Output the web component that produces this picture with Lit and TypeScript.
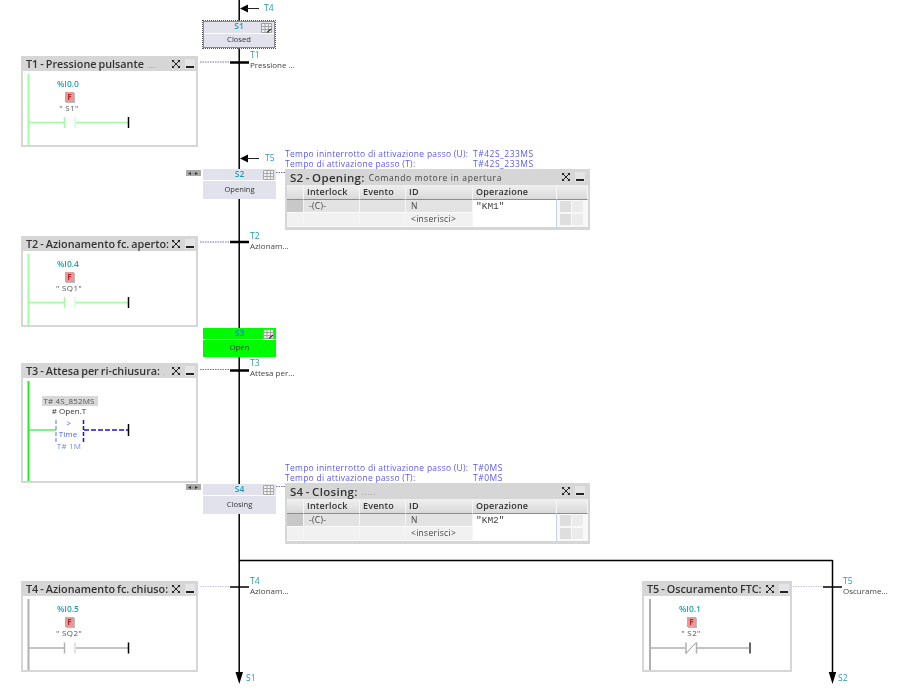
import { LitElement, html, css, svg, nothing } from "lit";
import { customElement } from "lit/decorators.js";

const pos = (x: number, y: number, w?: number, h?: number) =>
  `left:${x}px;top:${y}px;` + (w !== undefined ? `width:${w}px;` : "") + (h !== undefined ? `height:${h}px;` : "");

const expandIcon = svg`<svg class="ico" width="10" height="10" viewBox="0 0 10 10"><path d="M1 1h2.6L1 3.6zM9 1v2.6L6.4 1zM1 9V6.4L3.6 9zM9 9H6.4L9 6.4z" fill="#222"/><path d="M2 2l6 6M8 2l-6 6" stroke="#222" stroke-width="1"/></svg>`;

interface Tr { name: string; dim?: string; x: number; y: number; w: number; h: number; }

@customElement("app-root")
export class AppRoot extends LitElement {
  static styles = css`
    :host { display: block; width: 900px; height: 698px; }
    .canvas { position: relative; width: 900px; height: 698px; background: #fff; overflow: hidden; font-family: "Open Sans", "Noto Sans", sans-serif; filter: blur(0.25px); }
    .txt { position: absolute; white-space: pre; line-height: 10px; }
    .wire { position: absolute; left: 0; top: 0; width: 900px; height: 698px; }
    .teal { color: #1f9fae; font-size: 8.5px; }
    .sub { color: #444; font-size: 8px; }

    .step { position: absolute; box-sizing: border-box; background: #e1e2ec; display: flex; flex-direction: column; color: #333; font-size: 7.6px; text-align: center; }
    .step.green { background: #00fa00; }
    .step.green .n { color: #0b8fb0; }
    .step.sel { outline: 1px dotted #555; box-shadow: inset 0 0 0 1px #8a8a8a; padding: 1px; }
    .step .n { height: 12px; line-height: 10px; font-size: 8.5px; font-weight: 600; color: #1f9fae; border-bottom: 1px solid #fff; flex: none; position: relative; box-sizing: border-box; }
    .step.sel .n { line-height: 7px; }
    .step .l { flex: 1; display: flex; align-items: center; justify-content: center; padding-bottom: 3px; }
    .step .g { position: absolute; right: 2px; top: 1px; }
    .handle { position: absolute; background: #a9a9a9; color: #333; font-size: 6px; line-height: 6px; text-align: center; letter-spacing: 1px; }

    .panel { position: absolute; box-sizing: border-box; border: 2px solid #d6d6d6; background: #fff; }
    .panel .hd { position: absolute; left: -2px; right: -2px; top: -2px; height: 15px; background: #d6d6d6; display: flex; align-items: center; padding-left: 5px; }
    .panel .t { font-size: 10.8px; font-weight: 600; color: #333; white-space: pre; word-spacing: -.8px; flex: 1; overflow: hidden; }
    .panel .t i { font-style: normal; font-weight: 400; color: #999; font-size: 7px; }
    .btns { display: flex; align-items: center; gap: 4px; padding-right: 3px; flex: none; }
    .min { width: 8px; height: 10px; position: relative; padding: 0 1px; background: #e4e4e4; }
    .min::after { content: ""; position: absolute; left: 1px; right: 1px; bottom: 1px; height: 2px; background: #222; }

    .addr { position: absolute; font-size: 8.5px; font-weight: 600; color: #1fa3b0; line-height: 10px; white-space: pre; transform: translateX(-50%); }
    .tag { position: absolute; font-size: 8px; color: #555; line-height: 10px; white-space: pre; transform: translateX(-50%); letter-spacing: .4px; }
    .tag.val { left: 69px; top: 396px; letter-spacing: .15px; }
    .tag.var { left: 69px; top: 406px; color: #333; letter-spacing: 0; }
    .tag.gt { left: 69px; top: 418px; color: #4a64e4; }
    .tag.ty { left: 68px; top: 429px; color: #4a64e4; letter-spacing: 0; }
    .tag.lim { left: 69px; top: 441px; color: #6f8be6; letter-spacing: .2px; }
    .valbg { position: absolute; left: 42px; top: 396px; width: 56px; height: 10px; background: #d8d8d8; }
    .f { position: absolute; width: 9px; height: 10px; background: #e39a9c; color: #c62020; font-size: 8px; font-weight: 700; line-height: 10px; text-align: center; box-shadow: 1px 1px 0 #bbb; }

    .info { position: absolute; font-size: 8.5px; line-height: 10px; color: #5d5bea; white-space: pre; letter-spacing: .27px; }
    .info.val { letter-spacing: .5px; }

    .act { position: absolute; box-sizing: border-box; width: 305px; height: 61px; background: #d6d6d6; padding: 0 2px 3px; display: flex; flex-direction: column; }
    .act .hd { height: 16px; flex: none; display: flex; align-items: center; padding-left: 3px; }
    .act .t { font-size: 11.5px; font-weight: 600; color: #333; letter-spacing: .3px; word-spacing: -1px; white-space: pre; }
    .act .d { font-size: 8.5px; color: #444; letter-spacing: .65px; margin-left: 4px; flex: 1; white-space: pre; }
    .act .d.dim { color: #999; }
    .grid { flex: 1; display: grid; grid-template-columns: 17px 56px 46px 67px 84px 31px; grid-template-rows: 15px 13px 14px; background: #fff; }
    .h { background: linear-gradient(#f0f0f0, #d9d9d9); border-bottom: 1px solid #6c8fd8; border-right: 1px solid #f6f6f6; font-size: 9px; font-weight: 600; color: #333; line-height: 14px; padding-left: 3px; letter-spacing: .2px; }
    .c { background: #e3e3e3; border-right: 1px solid #f5f5f5; border-bottom: 1px solid #fafafa; font-size: 8.5px; color: #444; line-height: 11px; padding-left: 5px; letter-spacing: .3px; }
    .c.lt { background: #f1f1f1; }
    .c.sel { background: #c8c8c8; }
    .op { grid-column: 5; grid-row: 2 / span 2; background: #fff; font-family: "Liberation Mono", monospace; font-size: 9.5px; line-height: 11px; color: #444; padding: 1px 3px 0; border-right: 1px solid #c9d4ea; }
    .bt { grid-column: 6; grid-row: 2 / span 2; background: #f8f8f8; display: grid; grid-template-columns: 11px 11px; grid-auto-rows: 11px; gap: 2px 1px; padding: 1px 2px 0 3px; }
    .bt span { background: #dedede; }
    .bt span:nth-child(even) { background: #ebebeb; }
  `;

  private tr(t: Tr, rung: unknown) {
    return html`<div class="panel" style=${pos(t.x, t.y, t.w, t.h)}>
      <div class="hd"><span class="t">${t.name}${t.dim ? html` <i>${t.dim}</i>` : nothing}</span>
        <span class="btns">${expandIcon}<span class="min"></span></span></div>
    </div>${rung}`;
  }

  private contact(top: number, addr: string, tag: string, cx: number) {
    return html`<span class="addr" style=${pos(cx, top + 23)}>${addr}</span>
      <span class="f" style=${pos(cx - 3, top + 36)}>F</span>
      <span class="tag" style=${pos(cx + 1, top + 47)}>${tag}</span>`;
  }

  private label(x: number, y: number, a: string, b: string) {
    return html`<span class="txt teal" style=${pos(x, y)}>${a}</span><span class="txt sub" style=${pos(x, y + 10)}>${b}</span>`;
  }

  private grip() {
    return svg`<svg class="g" width="11" height="10" viewBox="0 0 11 10"><path d="M.5.5h10v9H.5zM4 .5v9M7.500 .5v9M.5 3.500h10M.5 6.500h10" fill="#f3f3f7" stroke="#a8a8a8" stroke-width="1"/></svg>`;
  }
  private gripEdit() {
    return svg`<svg class="g" width="11" height="10" viewBox="0 0 11 10"><path d="M.5.5h10v9H.5zM4 .5v9M7.500 .5v9M.5 3.500h10M.5 6.500h10" fill="#eef0f3" stroke="#a0a0a0" stroke-width="1"/><path d="M6 9.500l4-3.500" stroke="#333" stroke-width="1.200"/></svg>`;
  }

  private action(y: number, name: string, desc: string, dim: boolean, op: string) {
    return html`<div class="act" style=${pos(285, y)}>
      <div class="hd"><span class="t">${name}</span><span class="d ${dim ? "dim" : ""}">${desc}</span>
        <span class="btns">${expandIcon}<span class="min"></span></span></div>
      <div class="grid">
        <div class="h"></div><div class="h">Interlock</div><div class="h">Evento</div><div class="h">ID</div><div class="h">Operazione</div><div class="h"></div>
        <div class="c sel"></div><div class="c">-(C)-</div><div class="c"></div><div class="c">N</div>
        <div class="op">${op}</div>
        <div class="bt"><span></span><span></span><span></span><span></span></div>
        <div class="c lt"></div><div class="c lt"></div><div class="c lt"></div><div class="c lt">&lt;inserisci&gt;</div>
      </div>
    </div>`;
  }

  private wires() {
    const G = "#a3fba3";
    const K = "#b0b0b0";
    const rung = (rail: string, rx: number, top: number, bot: number, y: number, c1: number, c2: number, end: number, endC: string, second: string) => svg`
      <path d="M${rx} ${top}V${bot}" stroke=${rail} stroke-width="2" fill="none"/>
      <path d="M${rx} ${y}H${c1}M${c2} ${y}H${end}" stroke=${rail} stroke-width="1.500" fill="none"/>
      <path d="M${c1 + .5} ${y - 5.5}v11" stroke=${rail} stroke-width="1.500"/>
      <path d="M${c2 - .5} ${y - 5.5}v11" stroke=${second} stroke-width="1.500"/>
      <path d="M${end + .5} ${y - 5.5}v11" stroke=${endC} stroke-width="1.500"/>`;
    return svg`<svg class="wire" viewBox="0 0 900 698">
      <path d="M239.200 0V674M239 560.500H832.500M832.500 560V674" stroke="#000" stroke-width="1.500" fill="none"/>
      <path d="M235.500 672h7.500l-3.700 12zM828.700 672h7.500l-3.700 12z" fill="#000"/>
      <path d="M240 8.500l8-4v8zM240 158.500l8-4v8z" fill="#000"/>
      <path d="M246 8.500H259M246 158.500H259" stroke="#222" stroke-width="1"/>

      <path d="M230 62.500H249M230 242H249M230 370.500H249" stroke="#000" stroke-width="2.500"/>
      <path d="M230 587H249M823 587H842" stroke="#000" stroke-width="1.500"/>
      <path d="M200 62H229M200 242H229M200 369.500H229" stroke="#6c6cc8" stroke-width="1" stroke-dasharray="1.500 1" fill="none"/>
      <path d="M200 586.500H229M793 586.500H822" stroke="#c8c4e4" stroke-width="1" stroke-dasharray="1.500 1" fill="none"/>
      <path d="M276 172.500H285M276 486.500H285" stroke="#7272b8" stroke-width="1" stroke-dasharray="1.500 1" fill="none"/>

      ${rung(G, 28.5, 74, 145, 122.5, 64, 75.5, 128, "#000", "#d4fdd4")}
      ${rung(G, 28.5, 254, 325, 302.5, 64, 75.5, 128, "#000", "#d4fdd4")}
      ${rung(K, 28.5, 599, 670, 648, 64, 75.5, 128, "#000", "#dcdcdc")}

      <path d="M28.500 381V481" stroke="#22ee22" stroke-width="2"/>
      <path d="M28.500 430H56" stroke="#55ee55" stroke-width="1.500"/>
      <path d="M56 420V442" stroke="#6c8cf0" stroke-width="1.200" stroke-dasharray="4 2"/>
      <path d="M83.500 420V442" stroke="#1717d0" stroke-width="1.500" stroke-dasharray="4 2"/>
      <path d="M84 430H128" stroke="#1717d0" stroke-width="1.500" stroke-dasharray="5 2"/>
      <path d="M128.500 424V436" stroke="#000" stroke-width="1.500"/>

      <path d="M650 599V670" stroke=${K} stroke-width="2"/>
      <path d="M650 648H685M697 648H749" stroke=${K} stroke-width="1.500"/>
      <path d="M686 642.500V653.500M696.500 642.500V653.500" stroke=${K} stroke-width="1.500"/>
      <path d="M686 653.500L696 642.500" stroke="#999" stroke-width="1"/>
      <path d="M750 642.500V653.500" stroke="#666" stroke-width="2"/>
    </svg>`;
  }

  render() {
    return html`<div class="canvas">
      ${this.tr({ name: "T1 - Pressione pulsante", dim: " .....", x: 21, y: 56, w: 177, h: 91 }, this.contact(56, "%I0.0", '" S1"', 68))}
      ${this.tr({ name: "T2 - Azionamento fc. aperto:", x: 21, y: 236, w: 177, h: 91 }, this.contact(236, "%I0.4", '" SQ1"', 68))}
      ${this.tr({ name: "T3 - Attesa per ri-chiusura:", dim: " .", x: 21, y: 363, w: 177, h: 120 }, html`
        <span class="valbg"></span>
        <span class="tag val">T# 4S_852MS</span>
        <span class="tag var"># Open.T</span>
        <span class="tag gt">&gt;</span>
        <span class="tag ty">Time</span>
        <span class="tag lim">T# 1M</span>`)}
      ${this.tr({ name: "T4 - Azionamento fc. chiuso:", x: 21, y: 581, w: 177, h: 91 }, this.contact(581, "%I0.5", '" SQ2"', 68))}
      ${this.tr({ name: "T5 - Oscuramento FTC:", x: 642, y: 581, w: 150, h: 91 }, this.contact(581, "%I0.1", '" S2"', 690))}

      ${this.wires()}

      <span class="txt teal" style=${pos(264, 3)}>T4</span>
      <span class="txt teal" style=${pos(265, 153)}>T5</span>
      <span class="txt teal" style=${pos(246, 673)}>S1</span>
      <span class="txt teal" style=${pos(838, 673)}>S2</span>
      ${this.label(250, 50, "T1", "Pressione ...")}
      ${this.label(250, 231, "T2", "Azionam...")}
      ${this.label(250, 358, "T3", "Attesa per...")}
      ${this.label(250, 576, "T4", "Azionam...")}
      ${this.label(843, 576, "T5", "Oscurame...")}

      <div class="step sel" style=${pos(203, 21, 72, 27)}><div class="n">S1${this.gripEdit()}</div><div class="l">Closed</div></div>
      <div class="step" style=${pos(203, 169, 73, 30)}><div class="n">S2${this.grip()}</div><div class="l">Opening</div></div>
      <div class="step green" style=${pos(203, 328, 73, 29)}><div class="n">S3${this.gripEdit()}</div><div class="l">Open</div></div>
      <div class="step" style=${pos(203, 484, 73, 30)}><div class="n">S4${this.grip()}</div><div class="l">Closing</div></div>
      <div class="handle" style=${pos(186, 170, 15, 6)}>◂·▸</div>
      <div class="handle" style=${pos(186, 484, 15, 6)}>◂·▸</div>

      <span class="info" style=${pos(285, 149)}>Tempo ininterrotto di attivazione passo (U):</span>
      <span class="info val" style=${pos(473, 149)}>T#42S_233MS</span>
      <span class="info" style=${pos(285, 159)}>Tempo di attivazione passo (T):</span>
      <span class="info val" style=${pos(473, 159)}>T#42S_233MS</span>
      ${this.action(169, "S2 - Opening:", "Comando motore in apertura", false, '"KM1"')}

      <span class="info" style=${pos(285, 463)}>Tempo ininterrotto di attivazione passo (U):</span>
      <span class="info val" style=${pos(473, 463)}>T#0MS</span>
      <span class="info" style=${pos(285, 473)}>Tempo di attivazione passo (T):</span>
      <span class="info val" style=${pos(473, 473)}>T#0MS</span>
      ${this.action(483, "S4 - Closing:", ".....", true, '"KM2"')}
    </div>`;
  }
}
